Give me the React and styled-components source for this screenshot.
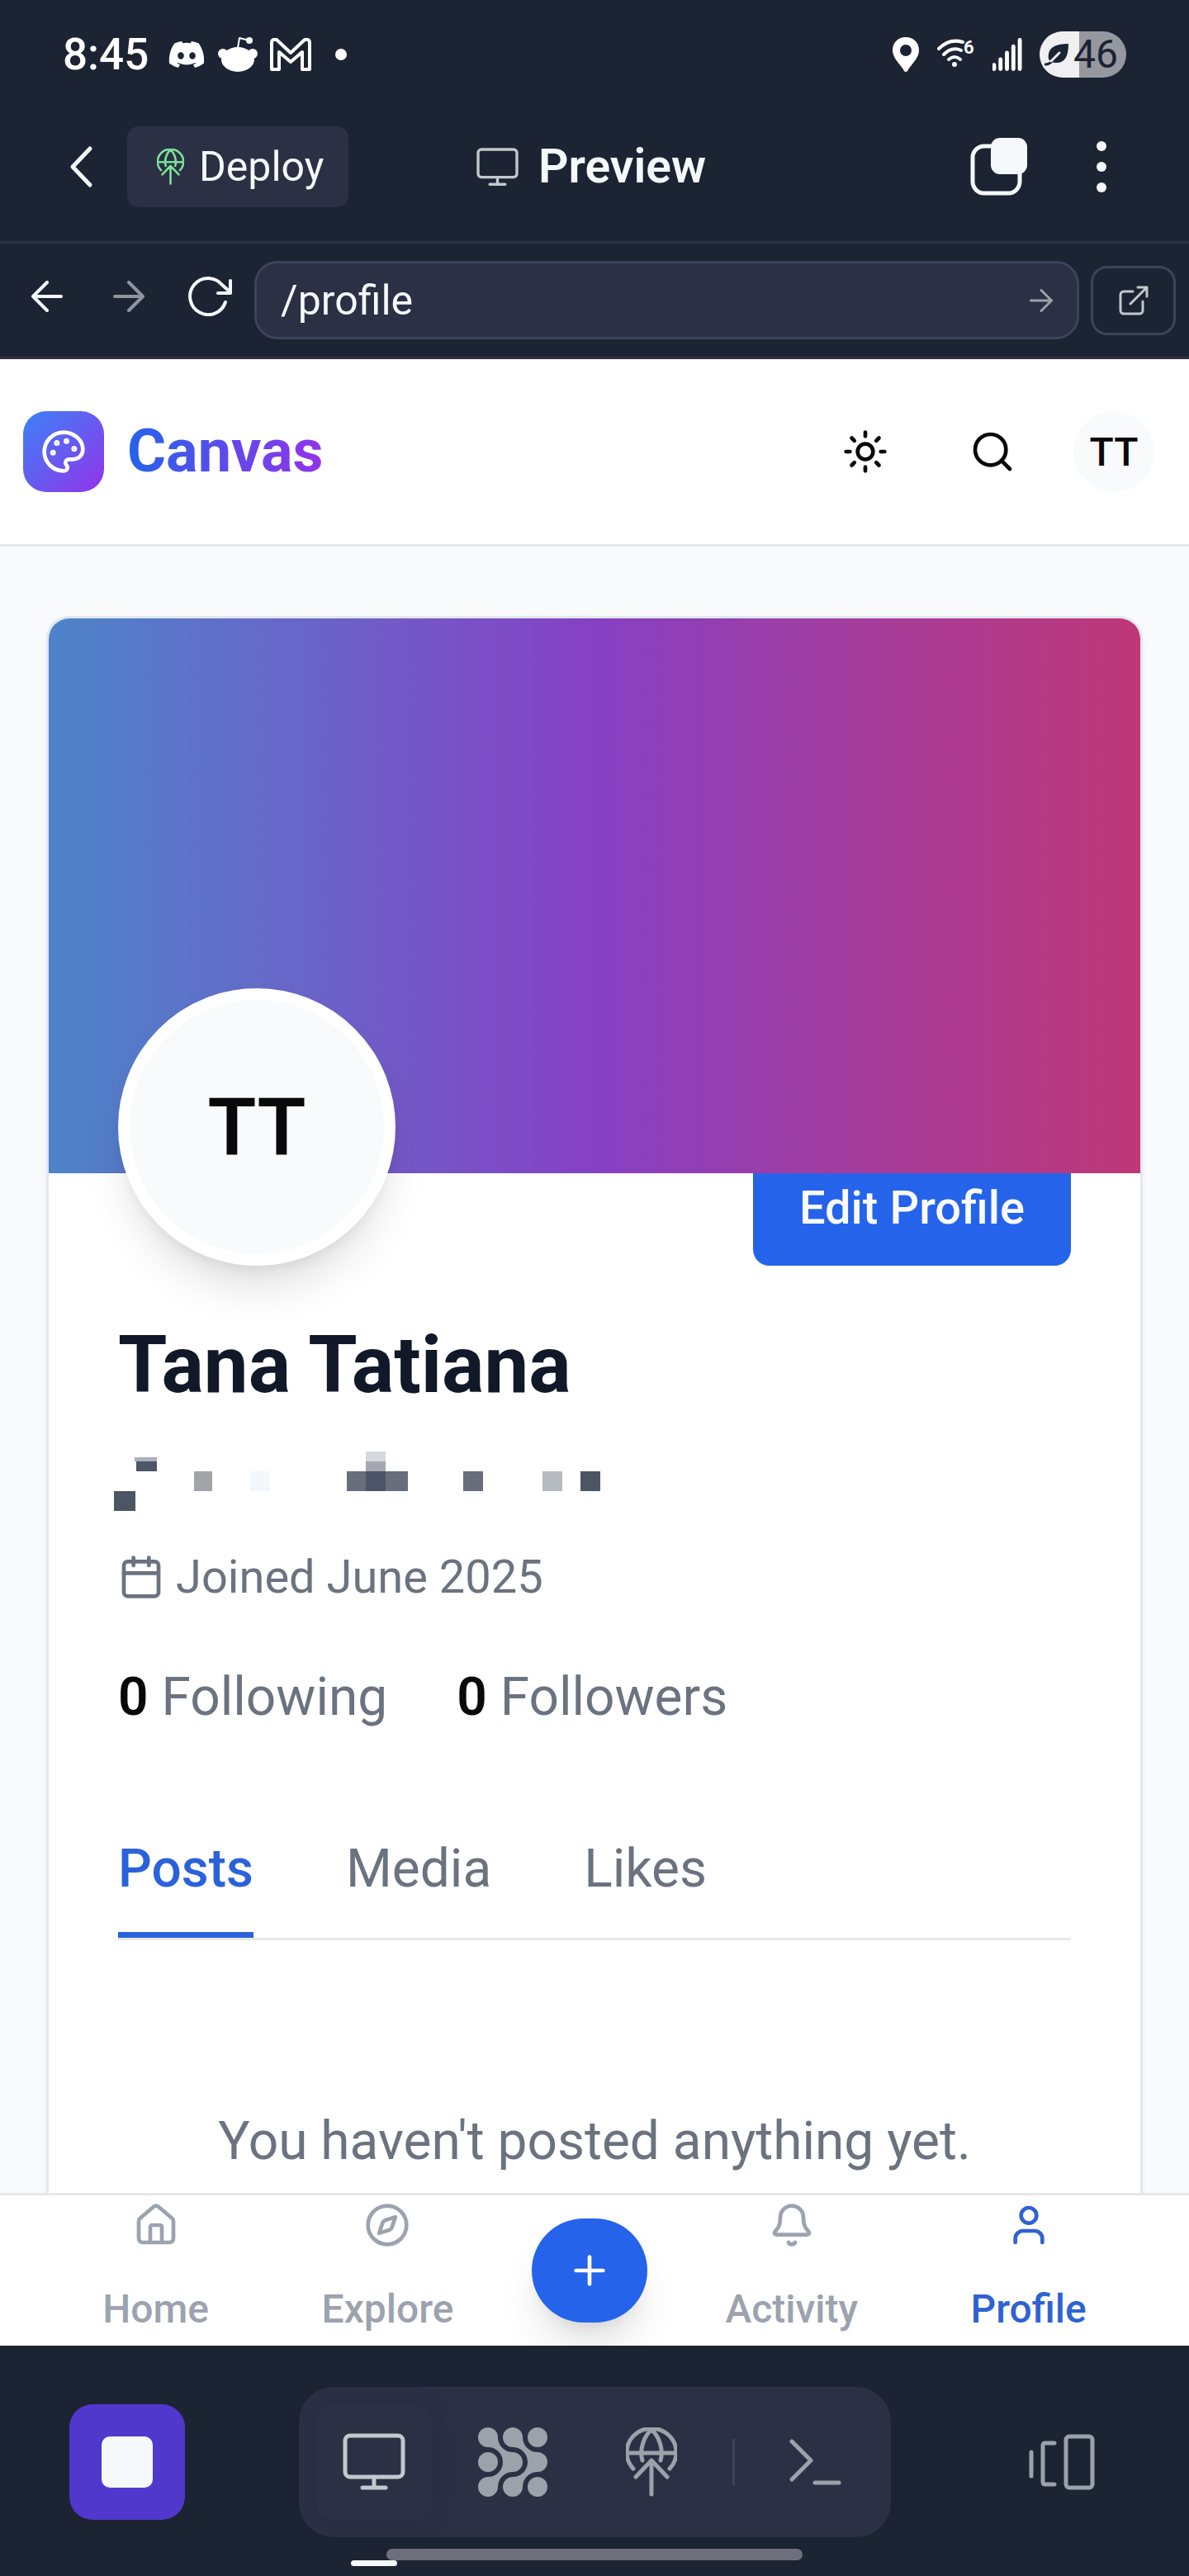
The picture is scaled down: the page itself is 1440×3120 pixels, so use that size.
import React from "react";
import styled, { createGlobalStyle } from "styled-components";
import { Palette, Sun, Search, Calendar, House, Compass, Plus, Bell, User } from "lucide-react";
import { FaDiscord } from "react-icons/fa6";

const GlobalStyle = createGlobalStyle`
  *, *::before, *::after { box-sizing: border-box; }
  body { margin: 0; background: #1c2333; font-family: Roboto, "Liberation Sans", sans-serif; }
  button, input { font-family: inherit; color: inherit; }
  button { padding: 0; border: 0; background: none; cursor: pointer; }
  a { color: inherit; text-decoration: none; }
  svg { display: block; flex: none; }
`;

const Screen = styled.div`
  min-height: 100vh;
  display: flex;
  flex-direction: column;
  background: #f9fafb;
`;

/* ---------- device status bar ---------- */

const StatusBar = styled.div`
  height: 112px;
  padding: 20px 76px 0;
  display: flex;
  align-items: center;
  justify-content: space-between;
  background: #1c2333;
  color: #fff;
`;

const StatusGroup = styled.div`
  display: flex;
  align-items: center;
  gap: ${(p) => p.$gap}px;
`;

const Clock = styled.time`
  margin-right: 8px;
  font-size: 53px;
  font-weight: 500;
  line-height: 56px;
`;

const MoreDot = styled.span`
  width: 14px;
  height: 14px;
  margin-left: 14px;
  border-radius: 50%;
  background: #fff;
`;

const Battery = styled.div`
  width: 105px;
  height: 56px;
  padding-left: 6px;
  display: flex;
  align-items: center;
  gap: 5px;
  border-radius: 28px;
  background: linear-gradient(90deg, #f0f0f2 46%, #95989e 46%);
  color: #1c2333;
  font-size: 48px;
  line-height: 56px;
`;

/* ---------- editor chrome ---------- */

const Toolbar = styled.header`
  height: 183px;
  padding: 0 64px 0 56px;
  display: grid;
  grid-template-columns: 1fr auto 1fr;
  align-items: center;
  background: #1c2333;
  border-bottom: 3px solid #2b3140;
  color: #f5f9fc;
`;

const ToolbarSide = styled.div`
  display: flex;
  align-items: center;
  justify-content: ${(p) => (p.$end ? "flex-end" : "flex-start")};
  gap: ${(p) => (p.$end ? 40 : 14)}px;
`;

const ToolButton = styled.button`
  width: 84px;
  height: 98px;
  display: flex;
  align-items: center;
  justify-content: center;
`;

const DeployButton = styled.button`
  height: 98px;
  padding: 0 30px 0 36px;
  display: flex;
  align-items: center;
  gap: 18px;
  border-radius: 14px;
  background: #2b3044;
  font-size: 50px;
  line-height: 56px;
`;

const ToolbarTitle = styled.h1`
  margin: 0;
  display: flex;
  align-items: center;
  gap: 24px;
  font-size: 57px;
  font-weight: 600;
  line-height: 64px;
`;

const AddressBar = styled.form`
  height: 140px;
  padding: 0 16px 0 7px;
  display: flex;
  align-items: center;
  background: #1c2333;
  border-bottom: 3px solid #2e2f3b;
  color: #f5f9fc;
`;

const HistoryButtons = styled.div`
  display: flex;
  padding: 0 4px 10px 0;
`;

const HistoryButton = styled.button`
  width: 99px;
  height: 84px;
  display: flex;
  align-items: center;
  justify-content: center;
  color: ${(p) => (p.disabled ? "#90949f" : "#f5f9fc")};
`;

const AddressField = styled.div`
  flex: 1;
  height: 95px;
  padding: 0 29px;
  display: flex;
  align-items: center;
  border: 3px solid #3c445c;
  border-radius: 28px;
  background: #2b3044;
`;

const AddressInput = styled.input`
  flex: 1;
  min-width: 0;
  height: 84px;
  padding: 0;
  border: 0;
  outline: 0;
  background: transparent;
  font-size: 50px;
`;

const OpenButton = styled.button`
  width: 103px;
  height: 84px;
  margin-left: 14px;
  display: flex;
  align-items: center;
  justify-content: center;
  border: 3px solid #3c445c;
  border-radius: 20px;
`;

/* ---------- previewed site ---------- */

const SiteHeader = styled.header`
  height: 227px;
  padding: 0 28px;
  display: flex;
  align-items: center;
  justify-content: space-between;
  background: #fff;
  border-bottom: 3px solid #e5e5e8;
  color: #09090b;
`;

const Brand = styled.a`
  display: flex;
  align-items: center;
  gap: 28px;
`;

const BrandMark = styled.span`
  width: 98px;
  height: 98px;
  display: flex;
  align-items: center;
  justify-content: center;
  border-radius: 28px;
  background: linear-gradient(135deg, #3b82f6, #9333ea);
  color: #fff;
`;

const BrandName = styled.span`
  font-size: 72px;
  font-weight: 700;
  line-height: 98px;
  background: linear-gradient(90deg, #2563eb, #9333ea);
  background-clip: text;
  color: transparent;
`;

const HeaderActions = styled.div`
  display: flex;
  align-items: center;
  gap: 21px;
`;

const HeaderButton = styled.button`
  width: ${(p) => p.$width}px;
  height: 126px;
  display: flex;
  align-items: center;
  justify-content: center;
`;

const SmallAvatar = styled.span`
  width: 98px;
  height: 98px;
  display: flex;
  align-items: center;
  justify-content: center;
  border-radius: 50%;
  background: #f9fafb;
  font-size: 48px;
  font-weight: 500;
`;

const Main = styled.main`
  flex: 1;
  padding: 84px 56px 0;
  display: flex;
`;

const Card = styled.section`
  flex: 1;
  min-width: 0;
  border: 3px solid #e2e8f0;
  border-bottom: 0;
  border-radius: 28px 28px 0 0;
  background: #fff;
  box-shadow: 0 4px 7px rgba(0, 0, 0, 0.05);
`;

const Banner = styled.div`
  position: relative;
  z-index: 1;
  height: 672px;
  border-radius: 25px 25px 0 0;
  background: linear-gradient(90deg, #4d84c9 0%, #6d60c8 27%, #8640c4 50%, #a53c9b 75%, #be3777 100%);
`;

const CardBody = styled.div`
  padding: 0 84px;
`;

const ProfileRow = styled.div`
  margin-top: -224px;
  display: flex;
  align-items: flex-end;
  justify-content: space-between;
`;

const Avatar = styled.div`
  position: relative;
  z-index: 2;
  width: 336px;
  height: 336px;
  display: flex;
  align-items: center;
  justify-content: center;
  border: 14px solid #fff;
  border-radius: 50%;
  background: #f9fafb;
  box-shadow: 0 35px 52px -10px rgba(0, 0, 0, 0.12), 0 14px 21px -14px rgba(0, 0, 0, 0.12);
  color: #09090b;
  font-size: 96px;
  font-weight: 600;
`;

const EditButton = styled.button`
  height: 140px;
  padding: 0 56px;
  border-radius: 20px;
  background: #2563eb;
  color: #f8fafc;
  font-size: 56px;
  font-weight: 500;
  line-height: 84px;
`;

const ProfileName = styled.h2`
  margin: 64px 0 49px;
  color: #111827;
  font-size: 96px;
  font-weight: 700;
  line-height: 112px;
`;

const Joined = styled.p`
  margin: 38px 0 56px;
  display: flex;
  align-items: center;
  gap: 14px;
  color: #6b7280;
  font-size: 56px;
  line-height: 84px;
`;

const Stats = styled.div`
  display: flex;
  gap: 84px;
`;

const Stat = styled.a`
  color: #6b7280;
  font-size: 64px;
  line-height: 96px;
  strong { color: #09090b; font-weight: 600; }
`;

const Tabs = styled.div`
  margin-top: 112px;
  display: flex;
  gap: 112px;
  border-bottom: 3px solid #e5e7eb;
`;

const Tab = styled.button`
  padding-bottom: 28px;
  border-bottom: 7px solid ${(p) => (p.$active ? "#2b62dc" : "transparent")};
  color: ${(p) => (p.$active ? "#2b62dc" : "#6b7280")};
  font-size: 64px;
  font-weight: ${(p) => (p.$active ? 500 : 400)};
  line-height: 96px;
`;

const Empty = styled.p`
  margin: 196px 0 0;
  color: #6b7280;
  font-size: 64px;
  line-height: 96px;
  text-align: center;
`;

const SiteNav = styled.nav`
  position: relative;
  height: 185px;
  padding: 0 56px;
  display: flex;
  align-items: center;
  justify-content: space-around;
  overflow: hidden;
  background: #fff;
  border-top: 3px solid #e5e7e9;
`;

const NavItem = styled.a`
  padding: 0 42px;
  display: flex;
  flex-direction: column;
  align-items: center;
  gap: 38px;
  color: ${(p) => (p.$active ? "#2f62d2" : "#9ca3af")};
  font-size: 48px;
  font-weight: 500;
  line-height: 72px;
`;

const CreateButton = styled.button`
  width: 140px;
  height: 126px;
  display: flex;
  align-items: center;
  justify-content: center;
  border-radius: 63px;
  background: #2563eb;
  color: #fff;
  box-shadow: 0 35px 52px -10px rgba(0, 0, 0, 0.12), 0 14px 21px -14px rgba(0, 0, 0, 0.12);
`;

/* ---------- editor dock ---------- */

const DockArea = styled.footer`
  padding: 50px 84px 19px;
  background: #1c2333;
  color: #9ca2aa;
`;

const DockRow = styled.div`
  display: flex;
  align-items: center;
  justify-content: space-between;
`;

const Dock = styled.div`
  padding: 21px;
  display: flex;
  align-items: center;
  gap: 28px;
  border-radius: 42px;
  background: #2b3044;
`;

const DockButton = styled.button`
  position: relative;
  width: 140px;
  height: 140px;
  display: flex;
  align-items: center;
  justify-content: center;
  border-radius: 20px;
  color: ${(p) => (p.$active ? "#c2c8cc" : "#9ca2aa")};
  box-shadow: ${(p) => (p.$active ? "0 4px 28px rgba(20, 24, 40, 0.18)" : "none")};
`;

const ActiveMarker = styled.span`
  position: absolute;
  left: 42px;
  bottom: -56px;
  width: 56px;
  height: 7px;
  border-radius: 4px;
  background: #f5f9fc;
`;

const StopButton = styled.button`
  width: 140px;
  height: 140px;
  display: flex;
  align-items: center;
  justify-content: center;
  border-radius: 28px;
  background: #5138cc;
`;

const StopGlyph = styled.span`
  width: 62px;
  height: 62px;
  border-radius: 10px;
  background: #f5f9fc;
`;

const DockDivider = styled.span`
  width: 3px;
  height: 56px;
  background: #3c445c;
`;

const HomeIndicator = styled.div`
  width: 504px;
  height: 14px;
  margin: 14px auto 0;
  border-radius: 7px;
  background: #6d707c;
`;

/* ---------- drawings ---------- */

const line = { fill: "none", stroke: "currentColor", strokeLinecap: "round", strokeLinejoin: "round" };

const RedditIcon = () => (
  <svg width="48" height="44" viewBox="0 0 48 44" fill="currentColor">
    <ellipse cx="24" cy="28" rx="20" ry="15" />
    <circle cx="6" cy="21" r="6" />
    <circle cx="42" cy="21" r="6" />
    <circle cx="38" cy="5" r="4" />
    <path d="M24 14 26 2 38 5" {...line} strokeWidth="2" />
  </svg>
);

const GmailIcon = () => (
  <svg width="50" height="40" viewBox="0 0 50 40" {...line} strokeWidth="4">
    <path d="M2 6C2 1 7 1 9 3L25 18 41 3c2-2 7-2 7 3v32h-9V17L25 29 11 17v21H2Z" />
  </svg>
);

const PinIcon = () => (
  <svg width="34" height="42" viewBox="0 0 34 42" fill="currentColor">
    <path fillRule="evenodd" d="M17 0C7 0 1 7 1 16c0 10 10 17 14 25q2 2 4 0c4-8 14-15 14-25C33 7 27 0 17 0Zm0 9a7 7 0 1 1 0 14 7 7 0 0 1 0-14Z" />
  </svg>
);

const WifiIcon = () => (
  <svg width="46" height="46" viewBox="0 -4 46 46">
    <g {...line} strokeWidth="4">
      <path d="M2 12Q15-1 31 4" />
      <path d="M8 19Q18 9 29 14" />
      <path d="M14 25Q21 19 28 25" />
    </g>
    <circle cx="21" cy="31" r="3" fill="currentColor" />
    <text x="32" y="18" fill="currentColor" fontFamily="Roboto, sans-serif" fontSize="22" fontWeight="700">6</text>
  </svg>
);

const SignalIcon = () => (
  <svg width="36" height="42" viewBox="1 0 37 42" {...line} strokeWidth="5">
    <path d="M3 34v5M11 27v12M19 19v20M27 11v28M35 3v36" />
  </svg>
);

const LeafIcon = () => (
  <svg width="30" height="28" viewBox="0 0 30 28">
    <path d="M5 20C3 8 10 1 29 1c0 16-5 24-16 23-2 0-3-1-5-2Z" fill="currentColor" />
    <path d="M1 26q6 0 10-6" {...line} strokeWidth="3" />
    <path d="m8 22 10-10" stroke="#f0f0f2" strokeWidth="3" strokeLinecap="round" />
  </svg>
);

const ChevronIcon = () => (
  <svg width="30" height="52" viewBox="0 0 30 52" {...line} strokeWidth="5">
    <path d="M26 4 5 26l21 22" />
  </svg>
);

const GlobeUpIcon = ({ width = 62, height = 84, color = "currentColor" }) => (
  <svg width={width} height={height} viewBox="0 0 62 84" {...line} stroke={color} strokeWidth="5">
    <path d="M9 50A30 29 0 1 1 53 50M3 31h56M20 40C16 27 22 10 31 3c9 7 15 24 11 37M12 60l19-20 19 20M31 40v41" />
  </svg>
);

const MonitorIcon = ({ width, stroke }) => (
  <svg width={width} height={(width * 70) / 76} viewBox="0 0 76 70" {...line} strokeWidth={stroke}>
    <rect x="3" y="3" width="70" height="50" rx="6" />
    <path d="M38 53v13M24 66h28" />
  </svg>
);

const TitleMonitor = styled.span`
  color: #c2c8cc;
`;

const CopyIcon = () => (
  <svg width="70" height="70" viewBox="0 0 70 70">
    <rect x="3" y="10" width="57" height="57" rx="14" {...line} strokeWidth="5" />
    <rect x="25" y="0" width="44" height="44" rx="11" fill="currentColor" />
  </svg>
);

const DotsIcon = () => (
  <svg width="14" height="64" viewBox="0 0 14 64" fill="currentColor">
    <circle cx="7" cy="7" r="6" />
    <circle cx="7" cy="32" r="6" />
    <circle cx="7" cy="57" r="6" />
  </svg>
);

const ArrowIcon = ({ size = 38, flip, stroke = 4, color = "currentColor" }) => (
  <svg width={size} height={size} viewBox="0 0 38 38" {...line} stroke={color} strokeWidth={stroke}>
    <path d={flip ? "M36 19H2M19 2 2 19l17 17" : "M2 19h34M19 2l17 17-17 17"} />
  </svg>
);

const ReloadIcon = () => (
  <svg width="54" height="48" viewBox="0 0 54 48" {...line} strokeWidth="4">
    <path d="M45 31A22 22 0 1 1 41 10l10 9M51 5v15H36" />
  </svg>
);

const ExternalIcon = () => (
  <svg width="36" height="36" viewBox="0 0 36 36" {...line} stroke="#c2c8cc" strokeWidth="3">
    <path d="M17 7H6a4 4 0 0 0-4 4v19a4 4 0 0 0 4 4h19a4 4 0 0 0 4-4V19M23 2h11v11M34 2 14 22" />
  </svg>
);

const BlobsIcon = () => (
  <svg width="84" height="84" viewBox="0 0 84 84" fill="currentColor">
    <path d="M12 24A18 18 0 0 1 12 60A12 12 0 1 0 24 72A18 18 0 0 1 42 54A12 12 0 0 0 42 30A18 18 0 0 1 24 12A12 12 0 1 0 12 24Z" />
    <path d="M42 24A18 18 0 0 1 42 60A12 12 0 1 0 54 72A18 18 0 0 1 72 54A12 12 0 0 0 72 30A18 18 0 0 1 54 12A12 12 0 1 0 42 24Z" />
    <circle cx="12" cy="42" r="12" />
    <circle cx="72" cy="12" r="12" />
    <circle cx="72" cy="72" r="12" />
  </svg>
);

const TerminalIcon = () => (
  <svg width="64" height="56" viewBox="0 0 64 56" {...line} strokeWidth="5">
    <path d="m3 3 23 23L3 49M31 53h29" />
  </svg>
);

const PanelsIcon = () => (
  <svg width="80" height="70" viewBox="0 0 80 70" {...line} strokeWidth="5">
    <path d="M3 23v29M31 12H20q-3 0-3 3v44q0 3 3 3h11" />
    <rect x="45" y="4" width="32" height="62" rx="4" />
  </svg>
);

const cells = [
  [0, 48, 26, 24, "#4b5563"],
  [25, 7, 27, 5, "#aab1bb"],
  [27, 12, 25, 12, "#4d566a"],
  [97, 24, 22, 24, "#a3a4a9"],
  [165, 24, 24, 24, "#f3f8fc"],
  [282, 24, 74, 24, "#686e7b"],
  [305, 24, 24, 24, "#4b5468"],
  [305, 12, 24, 12, "#a5a8b0"],
  [305, 0, 24, 12, "#d6d9dc"],
  [423, 24, 24, 24, "#686e7b"],
  [519, 24, 24, 24, "#b6bbc1"],
  [565, 24, 24, 24, "#4b5563"],
];

const HiddenHandle = styled.svg`
  width: 594px;
  height: 72px;
  margin-left: -5px;
`;

export default function App() {
  return (
    <Screen>
      <GlobalStyle />
      <StatusBar>
        <StatusGroup $gap={15}>
          <Clock>8:45</Clock>
          <FaDiscord size={46} />
          <RedditIcon />
          <GmailIcon />
          <MoreDot />
        </StatusGroup>
        <StatusGroup $gap={21}>
          <PinIcon />
          <WifiIcon />
          <SignalIcon />
          <Battery><LeafIcon />46</Battery>
        </StatusGroup>
      </StatusBar>

      <Toolbar>
        <ToolbarSide>
          <ToolButton aria-label="Back"><ChevronIcon /></ToolButton>
          <DeployButton>
            <GlobeUpIcon width={33} height={44} color="#7be09a" />
            Deploy
          </DeployButton>
        </ToolbarSide>
        <ToolbarTitle>
          <TitleMonitor><MonitorIcon width={51} stroke={5} /></TitleMonitor>
          Preview
        </ToolbarTitle>
        <ToolbarSide $end>
          <ToolButton aria-label="Tabs"><CopyIcon /></ToolButton>
          <ToolButton aria-label="More"><DotsIcon /></ToolButton>
        </ToolbarSide>
      </Toolbar>

      <AddressBar onSubmit={(e) => e.preventDefault()}>
        <HistoryButtons>
          <HistoryButton type="button" aria-label="Previous page"><ArrowIcon flip /></HistoryButton>
          <HistoryButton type="button" aria-label="Next page" disabled><ArrowIcon /></HistoryButton>
          <HistoryButton type="button" aria-label="Reload"><ReloadIcon /></HistoryButton>
        </HistoryButtons>
        <AddressField>
          <AddressInput aria-label="Path" defaultValue="/profile" />
          <button type="submit" aria-label="Go"><ArrowIcon size={28} color="#9da2ac" /></button>
        </AddressField>
        <OpenButton type="button" aria-label="Open in new tab"><ExternalIcon /></OpenButton>
      </AddressBar>

      <SiteHeader>
        <Brand href="#">
          <BrandMark><Palette size={56} /></BrandMark>
          <BrandName>Canvas</BrandName>
        </Brand>
        <HeaderActions>
          <HeaderButton $width={140} aria-label="Theme"><Sun size={56} /></HeaderButton>
          <HeaderButton $width={126} aria-label="Search"><Search size={56} /></HeaderButton>
          <HeaderButton $width={126} aria-label="Account"><SmallAvatar>TT</SmallAvatar></HeaderButton>
        </HeaderActions>
      </SiteHeader>

      <Main>
        <Card>
          <Banner />
          <CardBody>
            <ProfileRow>
              <Avatar>TT</Avatar>
              <EditButton>Edit Profile</EditButton>
            </ProfileRow>
            <ProfileName>Tana Tatiana</ProfileName>
            <HiddenHandle viewBox="0 0 594 72" aria-hidden="true">
              {cells.map(([x, y, w, h, c], i) => (
                <rect key={i} x={x} y={y} width={w} height={h} fill={c} />
              ))}
            </HiddenHandle>
            <Joined><Calendar size={56} />Joined June 2025</Joined>
            <Stats>
              <Stat href="#"><strong>0</strong> Following</Stat>
              <Stat href="#"><strong>0</strong> Followers</Stat>
            </Stats>
            <Tabs role="tablist">
              <Tab role="tab" aria-selected="true" $active>Posts</Tab>
              <Tab role="tab" aria-selected="false">Media</Tab>
              <Tab role="tab" aria-selected="false">Likes</Tab>
            </Tabs>
            <Empty>You haven't posted anything yet.</Empty>
          </CardBody>
        </Card>
      </Main>

      <SiteNav>
        <NavItem href="#"><House size={56} />Home</NavItem>
        <NavItem href="#"><Compass size={56} />Explore</NavItem>
        <CreateButton aria-label="Create"><Plus size={56} /></CreateButton>
        <NavItem href="#"><Bell size={56} />Activity</NavItem>
        <NavItem href="#" $active><User size={56} />Profile</NavItem>
      </SiteNav>

      <DockArea>
        <DockRow>
          <StopButton aria-label="Stop"><StopGlyph /></StopButton>
          <Dock>
            <DockButton $active aria-label="Preview">
              <MonitorIcon width={76} stroke={5} />
              <ActiveMarker />
            </DockButton>
            <DockButton aria-label="Agent"><BlobsIcon /></DockButton>
            <DockButton aria-label="Publish"><GlobeUpIcon /></DockButton>
            <DockDivider />
            <DockButton aria-label="Shell"><TerminalIcon /></DockButton>
          </Dock>
          <DockButton aria-label="Switch panel"><PanelsIcon /></DockButton>
        </DockRow>
        <HomeIndicator />
      </DockArea>
    </Screen>
  );
}
